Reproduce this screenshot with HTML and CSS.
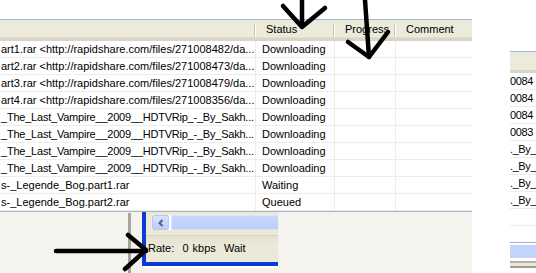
FILE: index.html
```html
<!DOCTYPE html>
<html lang="en">
<head>
  <meta charset="UTF-8">
  <title>Downloads</title>
  <link rel="stylesheet" href="styles.css">
</head>
<body>
  <div class="stage">
    <div class="main">
      <div class="list">
        <div class="row head">
          <div class="cell"></div>
          <div class="cell">Status</div>
          <div class="cell">Progress</div>
          <div class="cell">Comment</div>
        </div>
        <div class="row"><div class="cell">art1.rar &lt;http://rapidshare.com/files/271008482/da...</div><div class="cell">Downloading</div><div class="cell"></div><div class="cell"></div></div>
        <div class="row"><div class="cell">art2.rar &lt;http://rapidshare.com/files/271008473/da...</div><div class="cell">Downloading</div><div class="cell"></div><div class="cell"></div></div>
        <div class="row"><div class="cell">art3.rar &lt;http://rapidshare.com/files/271008479/da...</div><div class="cell">Downloading</div><div class="cell"></div><div class="cell"></div></div>
        <div class="row"><div class="cell">art4.rar &lt;http://rapidshare.com/files/271008356/da...</div><div class="cell">Downloading</div><div class="cell"></div><div class="cell"></div></div>
        <div class="row"><div class="cell tight">_The_Last_Vampire__2009__HDTVRip_-_By_Sakh...</div><div class="cell">Downloading</div><div class="cell"></div><div class="cell"></div></div>
        <div class="row"><div class="cell tight">_The_Last_Vampire__2009__HDTVRip_-_By_Sakh...</div><div class="cell">Downloading</div><div class="cell"></div><div class="cell"></div></div>
        <div class="row"><div class="cell tight">_The_Last_Vampire__2009__HDTVRip_-_By_Sakh...</div><div class="cell">Downloading</div><div class="cell"></div><div class="cell"></div></div>
        <div class="row"><div class="cell tight">_The_Last_Vampire__2009__HDTVRip_-_By_Sakh...</div><div class="cell">Downloading</div><div class="cell"></div><div class="cell"></div></div>
        <div class="row"><div class="cell">s-_Legende_Bog.part1.rar</div><div class="cell">Waiting</div><div class="cell"></div><div class="cell"></div></div>
        <div class="row"><div class="cell">s-_Legende_Bog.part2.rar</div><div class="cell">Queued</div><div class="cell"></div><div class="cell"></div></div>
      </div>

      <div class="panel">
        <div class="splitter"></div>
        <div class="xpwin">
          <div class="hscroll">
            <div class="sbtn">
              <svg width="8" height="8" viewBox="0 0 8 8"><path d="M5.5 1 L2.5 4 L5.5 7" fill="none" stroke="#4d6185" stroke-width="2"/></svg>
            </div>
            <div class="strack"></div>
          </div>
          <div class="statusbar">Rate:&nbsp; 0 kbps&nbsp; Wait</div>
        </div>
      </div>
    </div>

    <div class="gap"></div>

    <div class="side">
      <div class="srow shead"></div>
      <div class="srow">0084</div>
      <div class="srow">0084</div>
      <div class="srow">0084</div>
      <div class="srow">0083</div>
      <div class="srow">._By_</div>
      <div class="srow">._By_</div>
      <div class="srow">._By_</div>
      <div class="srow">._By_</div>
      <div class="srow"></div>
      <div class="sfoot">
        <div class="sbar"></div>
      </div>
    </div>
  </div>

  <svg class="marks" width="536" height="273" viewBox="0 0 536 273">
    <g fill="none" stroke="#000" stroke-width="4.5" stroke-linecap="round" stroke-linejoin="round">
      <path d="M302 0 L302 26"/>
      <path d="M283 6 L302 27 L325 8"/>
      <path d="M365 0 L369 57"/>
      <path d="M348 42 L369 57 L388 32"/>
      <path d="M56 251 L146 251"/>
      <path d="M128 235 L146 250 L125 269"/>
    </g>
  </svg>
</body>
</html>
```

FILE: styles.css
```css
body {
  margin: 0;
  width: 536px;
  height: 273px;
  overflow: hidden;
  position: relative;
  background: #fff;
  font-family: "Liberation Sans", Arial, sans-serif;
  font-size: 11px;
  color: #000;
}

.stage {
  display: flex;
  height: 273px;
}

.main {
  width: 472px;
  margin-top: 19px;
  border-top: 1px solid #a5b4ca;
  display: flex;
  flex-direction: column;
  background: #f5f3ee;
}

.list {
  background: #fff;
  border-bottom: 1px solid #a5b4ca;
}

.row {
  display: grid;
  grid-template-columns: 256px 79px 61px 76px;
  height: 17px;
}

.row .cell {
  border-bottom: 1px solid #efeee6;
  border-right: 1px solid #efeee6;
  padding-left: 6px;
  line-height: 16px;
  white-space: nowrap;
  overflow: hidden;
}

.row .cell:first-child {
  padding-left: 1px;
}

.row .cell.tight {
  letter-spacing: -0.22px;
}

.row .cell:last-child {
  border-right: none;
}

.row.head {
  height: 21px;
  background: #ebeadb;
}

.row.head .cell {
  position: relative;
  border-right: none;
  border-bottom: 3px solid #d9d5c4;
  padding-left: 10px;
  line-height: 19px;
  box-shadow: inset 0 -1px 0 #e2dfcd;
}

.row.head .cell::after {
  content: "";
  position: absolute;
  right: 1px;
  top: 3px;
  bottom: 1px;
  width: 1px;
  background: #c7c5b2;
  box-shadow: 1px 0 0 #fff;
}

.row.head .cell:last-child::after {
  display: none;
}

.panel {
  flex: 1;
  display: flex;
  padding-left: 128px;
}

.splitter {
  width: 3px;
  background: #a7a39b;
  margin-top: 1px;
}

.xpwin {
  margin-left: 11px;
  width: 132px;
  height: 50px;
  border-left: 4px solid #0b3ad6;
  border-bottom: 4px solid #0b3ad6;
  background: #ece9d8;
  display: flex;
  flex-direction: column;
  box-shadow: 0 2px 0 #fff;
}

.hscroll {
  display: flex;
  height: 15px;
  margin: 3px 0 0 6px;
  background: #fff;
}

.sbtn {
  width: 15px;
  height: 13px;
  border: 1px solid #b6c8f3;
  border-radius: 2px;
  background: linear-gradient(#d9e4fd, #b9ccfb);
  display: flex;
  align-items: center;
  justify-content: center;
}

.strack {
  flex: 1;
  margin-left: 2px;
  border: 1px solid #dbe4fb;
  border-right: none;
  background: linear-gradient(#c6d6fd, #bccffb);
}

.statusbar {
  margin-top: 5px;
  flex: 1;
  border-top: 1px solid #d6d3c4;
  background: linear-gradient(#e4e1cf, #ece9d8 40%, #ece9d8);
  padding-left: 2px;
  line-height: 24px;
  white-space: nowrap;
  word-spacing: 1px;
}

.gap {
  width: 38px;
}

.side {
  width: 26px;
  margin-top: 51px;
  border-top: 1px solid #a5b4ca;
  display: flex;
  flex-direction: column;
  overflow: hidden;
}

.srow {
  height: 16px;
  border-bottom: 1px solid #efeee6;
  line-height: 16px;
  white-space: nowrap;
  letter-spacing: -0.4px;
}

.srow.shead {
  height: 18px;
  background: #ebeadb;
  border-bottom: 3px solid #d9d5c4;
}

.sfoot {
  margin-top: 16px;
  border-top: 1px solid #a5b4ca;
  padding-top: 2px;
  flex: 1;
  background: linear-gradient(#fff 0, #fff 18px, #b3b0a6 18px, #b3b0a6 20px, #e9e7df 20px, #e9e7df 23px, #9f9c93 23px, #9f9c93 25px, #fff 25px);
}

.sbar {
  height: 13px;
  background: #c4d3fa;
}

.marks {
  position: absolute;
  left: 0;
  top: 0;
  pointer-events: none;
}
```
